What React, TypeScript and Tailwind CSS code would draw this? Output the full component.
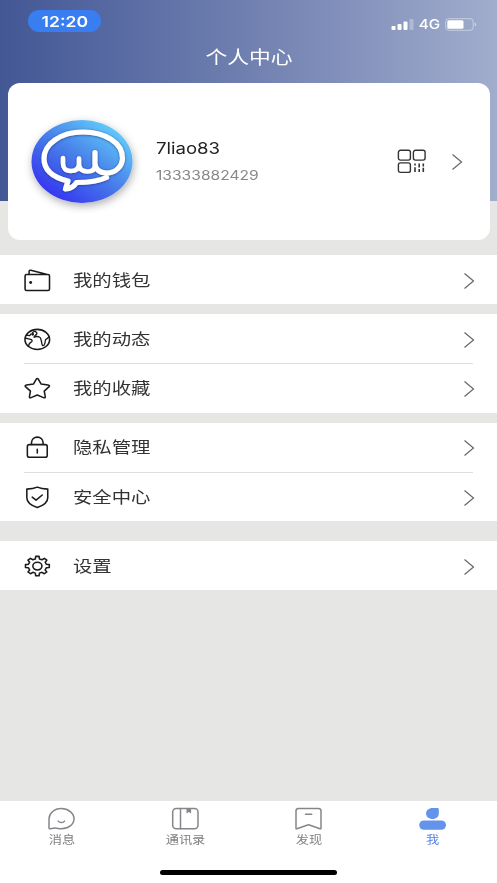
import React from 'react';

interface MenuItem {
  label: string;
  icon: React.ReactNode;
}

interface TabItem {
  label: string;
  icon: React.ReactNode;
  active?: boolean;
}

const Icon: React.FC<{ children: React.ReactNode }> = ({ children }) => (
  <svg width="29" height="25" viewBox="0 0 28 24" fill="none" stroke="#1b1b1b" strokeWidth="1.5" strokeLinejoin="round" strokeLinecap="round">
    {children}
  </svg>
);

const Chevron: React.FC = () => (
  <svg width="12" height="18" viewBox="0 0 12 18" fill="none" stroke="#666" strokeWidth="1.2">
    <path d="M1.5 1.5 10.5 9l-9 7.500" />
  </svg>
);

const WalletIcon = (
  <Icon>
    <path d="M3.4 6.200h20.800q1.400 0 1.400 1.400v12.600q0 1.400-1.400 1.400H3.400Q2 21.600 2 20.200V7.600q0-1.400 1.400-1.400ZM5.900 6V3.200q.1-1.500 1.700-1.100L22.500 6" />
    <circle cx="7.400" cy="13.900" r="1.400" fill="#1b1b1b" stroke="none" />
  </Icon>
);

const GlobeIcon = (
  <Icon>
    <ellipse cx="13.8" cy="11.9" rx="11.900" ry="9.700" />
    <path
      d="M3.400 8c1.500-.6 2 .6 3 .2 1-.4.7-1.600 1.800-1.600 1 0 .4 1.200 1.400 1 1.100-.3.100-1.400-.4-2.200.8-1 1.800-1.500 2.800-1 1.200.6 1.900 1.500 1.100 2.500-.8.900-2.100 1-2.400 2.900M2.200 10.900c1.700-.5 2.600.8 4 .7 1.800-.1 2.900 1 2.500 2.100-.5 1.100-2.300 1.200-2.700 2.700-.3 1-.5 1.500-1 2.200M10.700 9.900c1.300-1.300 3.200-.8 4.800-.5 1.900.4 1.500 2 2.100 3.400.5 1.400.4 4.900 1.600 5.100 1.500.2 1.600-1.400 2-2.600.3-1 .1-2.300.7-3.100.7-.9 2-.9 3.200-2.900"
      strokeWidth="1.300"
    />
  </Icon>
);

const StarIcon = (
  <Icon>
    <path d="M12.700 3.100q1-1.700 2.200 0l2.500 4.500 6.800 1.100q2.200.4.800 1.800l-4.500 4.100 1 5.200q.1 1.700-1.700 1l-6-2.500-6 2.500q-1.700.7-1.600-1l1-5.200-4.600-4.100q-1.400-1.400.8-1.800l6.800-1.100Z" />
  </Icon>
);

const LockIcon = (
  <Icon>
    <rect x="4.200" y="9.200" width="19.200" height="12.300" rx="2" />
    <path d="M8.200 9V7.500C8.200 4.500 10.500 2 13.800 2s5.600 2.500 5.600 5.500V9M13.800 13.600v3.600" />
  </Icon>
);

const ShieldIcon = (
  <Icon>
    <path d="M13.800 2C11 3.200 7.500 3.800 3.700 3.900v8.300c0 4.700 4.200 7.500 10.100 9.500 5.900-2 10.100-4.800 10.100-9.500V3.900C20.100 3.800 16.600 3.200 13.800 2Z" />
    <path d="m8.900 11.700 3.700 2.900 6-5" />
  </Icon>
);

const GearIcon = (
  <Icon>
    <path d="M11.900 4.700 12.300 2.200h3.200l.4 2.500 2.400.8 2.300-1.400 2.400 1.800-1.600 1.900 1.100 2 2.900.4v2.700l-2.900.4-1.100 2 1.600 1.900-2.400 1.800-2.300-1.400-2.400.8-.4 2.600h-3.200l-.4-2.600-2.400-.8-2.300 1.400-2.400-1.800 1.600-1.900-1.100-2-2.900-.4v-2.700l2.900-.4 1.100-2-1.600-1.900 2.400-1.800 2.300 1.400Z" />
    <ellipse cx="13.900" cy="11.600" rx="4.400" ry="3.700" />
  </Icon>
);

const QrIcon: React.FC = () => (
  <svg width="30" height="25" viewBox="0 0 30 25" fill="none" stroke="#333" strokeWidth="1.400">
    <rect x="1.400" y="1.300" width="12" height="9.800" rx="2" />
    <rect x="16.400" y="1.300" width="11.700" height="9.800" rx="2" />
    <rect x="1.400" y="13.900" width="12" height="9.500" rx="2" />
    <path d="M18 14.500v2M18 18.300v4.700M22.200 14.500v4M22.200 20v3M26.300 14.500v3M26.300 18.700v4.300" strokeWidth="1.600" />
  </svg>
);

const Avatar: React.FC = () => (
  <svg width="118" height="102" viewBox="0 0 118 102" fill="none" strokeLinecap="round" strokeLinejoin="round">
    <defs>
      <linearGradient id="avatarFill" x1="0.15" y1="0.9" x2="0.85" y2="0.1">
        <stop offset="0" stopColor="#3533f0" />
        <stop offset="0.5" stopColor="#477ee9" />
        <stop offset="1" stopColor="#63cdfa" />
      </linearGradient>
      <filter id="avatarShadow" x="-20%" y="-20%" width="140%" height="150%">
        <feDropShadow dx="1" dy="3" stdDeviation="4" floodColor="#000" floodOpacity="0.32" />
      </filter>
      <filter id="markShadow" x="-20%" y="-20%" width="140%" height="140%">
        <feDropShadow dx="0" dy="0.5" stdDeviation="1" floodColor="#17307c" floodOpacity="0.8" />
      </filter>
    </defs>
    <ellipse cx="59" cy="50.500" rx="50.500" ry="41.500" fill="url(#avatarFill)" filter="url(#avatarShadow)" />
    <g stroke="#fff" filter="url(#markShadow)">
      <path
        d="M72 41.500v11c0 5.500 4.500 9.500 11.500 9.500 9.500 0 16-7 16-15 0-15-17-26-39.500-26S21 33 21 47.500C21 59 30 66.500 45 70l-2.500 8c4.500-.2 8.500-2.200 11-6.500C65 71.500 76 70 83.500 66.500"
        strokeWidth="5.200"
      />
      <path d="M40 47v5.500c0 4.500 2.500 7.500 7.500 7.500 5.500 0 8.500-2.500 8.500-7v-5.500V53c0 5 3.500 7.500 8.500 7.500 4 0 7.500-1.500 7.500-6" strokeWidth="4.600" />
    </g>
  </svg>
);

const groups: { className: string; items: MenuItem[] }[] = [
  { className: 'mt-[15px]', items: [{ label: '我的钱包', icon: WalletIcon }] },
  {
    className: 'mt-2.5',
    items: [
      { label: '我的动态', icon: GlobeIcon },
      { label: '我的收藏', icon: StarIcon },
    ],
  },
  {
    className: 'mt-2.5',
    items: [
      { label: '隐私管理', icon: LockIcon },
      { label: '安全中心', icon: ShieldIcon },
    ],
  },
  { className: 'mt-5', items: [{ label: '设置', icon: GearIcon }] },
];

const tabs: TabItem[] = [
  {
    label: '消息',
    icon: (
      <>
        <path d="M2 21.300V12C2 6.500 7 1.500 14.200 1.500S27 6.300 27 11.800c0 5.700-5.500 10-12.800 10-2.300 0-4-.7-6-.7-2.300 0-4 .6-5.400.6Q2 21.800 2 21.300Z" />
        <path d="M11.200 14.100c1.500 2 4.800 2 6.300 0" />
      </>
    ),
  },
  {
    label: '通讯录',
    icon: (
      <>
        <rect x="1.700" y="1.500" width="25.300" height="20.300" rx="3.500" />
        <path d="M9.500 1.500v20.300" />
        <path d="M15.500 1.500h4.600v5l-2.300-1.600-2.300 1.600Z" fill="#85868a" stroke="none" />
      </>
    ),
  },
  {
    label: '发现',
    icon: (
      <>
        <path d="M4.500 1.500h20q2.500 0 2.500 2.300v17.700q-.2.500-1 .3L15.400 18q-.9-.3-1.800 0L3 21.800q-.8.200-1-.3V3.800q0-2.300 2.500-2.300Z" />
        <path d="M11.500 7.300h6.200" />
      </>
    ),
  },
  {
    label: '我',
    active: true,
    icon: (
      <g fill="#6393eb" stroke="none">
        <path d="M14.500 1h5q1.300 0 1.300 1.200v4.300c0 3.200-2.700 5.500-6.300 5.500S8.100 9.700 8.100 6.500 10.900 1 14.500 1Z" />
        <rect x="1.200" y="13.400" width="26.800" height="9.400" rx="4.700" />
      </g>
    ),
  },
];

const StatusBar: React.FC = () => (
  <div className="flex h-[42px] items-start justify-between pt-2.5 pr-5 pl-7">
    <div className="flex h-[22px] w-[73px] items-center justify-center rounded-full bg-[#387ef1]">
      <span className="inline-block scale-x-[1.17] text-[15px] leading-none font-semibold">12:20</span>
    </div>
    <div className="flex items-center pt-2">
      <svg width="23" height="13" viewBox="0 0 23 13" fill="#fff">
        <rect x="0.500" y="8" width="4" height="4" rx="1" />
        <rect x="6.500" y="6" width="4" height="6" rx="1" />
        <rect x="12.500" y="3.500" width="4" height="8.500" rx="1" />
        <rect x="18.500" y="1" width="4" height="11" rx="1" opacity="0.3" />
      </svg>
      <div className="flex w-[31px] justify-center">
        <span className="inline-block scale-x-[1.13] text-[13.5px] leading-none font-medium">4G</span>
      </div>
      <svg width="32" height="13" viewBox="0 0 32 13" fill="none">
        <rect x="0.700" y="0.700" width="27.500" height="11.600" rx="3" stroke="#fff" strokeOpacity="0.45" />
        <rect x="2.300" y="2.300" width="16.200" height="8.400" rx="1.500" fill="#fff" />
        <path d="M29.700 4.500q1.500.5 1.500 2t-1.500 2Z" fill="#fff" fillOpacity="0.5" />
      </svg>
    </div>
  </div>
);

const MenuRow: React.FC<{ item: MenuItem; divided: boolean }> = ({ item, divided }) => (
  <div className={`mx-6 flex h-[49.2px] items-center ${divided ? 'border-t border-[#dedede]' : ''}`}>
    <div className="-ml-[1.5px] w-[50px] pt-px">{item.icon}</div>
    <span className="inline-block origin-left scale-x-[1.21] text-base text-[#333]">{item.label}</span>
    <div className="-mr-[2px] ml-auto pt-[2px]">
      <Chevron />
    </div>
  </div>
);

const App: React.FC = () => {
  return (
    <div className="flex h-[883px] w-[497px] flex-col overflow-hidden bg-[#e6e6e5] font-['Inter','Noto_Sans_CJK_SC',sans-serif]">
      {/* Header */}
      <div className="h-[201px] shrink-0 bg-linear-to-r from-[#435795] via-[#7080b0] to-[#a1adcd] text-white">
        <StatusBar />
        <div className="flex h-[31px] items-center justify-center">
          <h1 className="scale-x-[1.21] text-lg">个人中心</h1>
        </div>
      </div>

      {/* Profile card */}
      <div className="mr-[7px] -mt-[118px] ml-[7.5px] flex h-[157px] shrink-0 items-center rounded-xl bg-white pl-[15px]">
        <Avatar />
        <div className="ml-[15.5px] flex flex-col gap-[9px] pb-0.5">
          <span className="inline-block origin-left scale-x-[1.16] text-base leading-5 text-[#222]">7liao83</span>
          <span className="inline-block origin-left scale-x-[1.2] text-[13px] leading-4 text-[#888]">13333882429</span>
        </div>
        <div className="mr-[27.5px] ml-auto flex items-center gap-6">
          <QrIcon />
          <Chevron />
        </div>
      </div>

      {/* Menu */}
      {groups.map((group) => (
        <div key={group.items[0].label} className={`shrink-0 bg-white ${group.className}`}>
          {group.items.map((item, i) => (
            <MenuRow key={item.label} item={item} divided={i > 0} />
          ))}
        </div>
      ))}

      {/* Tab bar */}
      <div className="mt-auto flex h-[82px] shrink-0 flex-col bg-white">
        <div className="flex pr-[3px]">
          {tabs.map((tab) => (
            <div key={tab.label} className="flex flex-1 flex-col items-center pt-1.5">
              <svg width="29" height="24" viewBox="0 0 29 24" fill="none" stroke="#85868a" strokeWidth="1.500" strokeLinecap="round">
                {tab.icon}
              </svg>
              <span className={`mt-px inline-block scale-x-[1.2] text-[11px] leading-4 ${tab.active ? 'text-[#5484ea]' : 'text-[#808080]'}`}>
                {tab.label}
              </span>
            </div>
          ))}
        </div>
        <div className="mx-auto mt-auto mb-2 h-[5px] w-[177px] rounded-full bg-black" />
      </div>
    </div>
  );
};

export default App;
